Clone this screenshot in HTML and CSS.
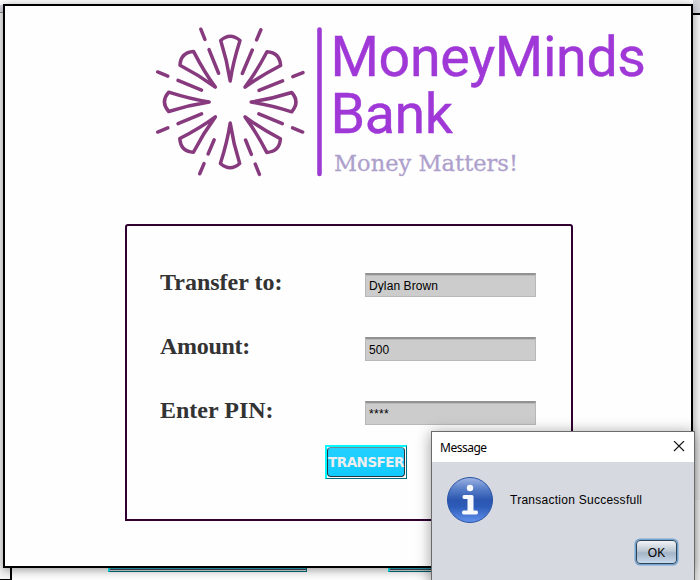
FILE: index.html
```html
<!DOCTYPE html>
<html lang="en">
<head>
<meta charset="utf-8">
<title>MoneyMinds Bank</title>
<link rel="stylesheet" href="styles.css">
</head>
<body>
<div class="desktop">
  <div class="back-title-left"></div>
  <div class="back-title-right"></div>
  <div class="back-window">
    <div class="back-button back-button-a"></div>
    <div class="back-button back-button-b"></div>
  </div>

  <main class="window">
    <svg class="logo" width="500" height="160" viewBox="150 22 500 160">
      <defs>
        <path id="petal" d="M0 -21C-1.800 -33 -5.200 -48 -9.500 -61.500Q0 -70 9.800 -61.500C5.500 -48 1.800 -33 0 -21Z"/>
        <path id="ray" d="M0 -31V-56.500M0 -67.500V-78.500"/>
        <path id="short-ray" d="M0 -41V-56.500M0 -67V-78"/>
      </defs>
      <g class="burst" transform="translate(230.200 102)">
        <use href="#petal"/>
        <use href="#petal" transform="rotate(45)"/>
        <use href="#petal" transform="rotate(90)"/>
        <use href="#petal" transform="rotate(135)"/>
        <use href="#petal" transform="rotate(180)"/>
        <use href="#petal" transform="rotate(225)"/>
        <use href="#petal" transform="rotate(270)"/>
        <use href="#petal" transform="rotate(315)"/>
        <use href="#ray" transform="rotate(23)"/>
        <use href="#ray" transform="rotate(68)"/>
        <use href="#ray" transform="rotate(112.500)"/>
        <use href="#short-ray" transform="rotate(158)"/>
        <use href="#short-ray" transform="rotate(203)"/>
        <use href="#ray" transform="rotate(247.500)"/>
        <use href="#ray" transform="rotate(292.500)"/>
        <use href="#ray" transform="rotate(338)"/>
      </g>
      <path class="divider" d="M319.500 29.500V174"/>
      <text class="brand" x="330.500" y="76" textLength="315.500">MoneyMinds</text>
      <text class="brand" x="330.500" y="132.500" textLength="122.500">Bank</text>
      <text class="tagline" x="334" y="170.500" textLength="184" lengthAdjust="spacingAndGlyphs">Money Matters!</text>
    </svg>

    <section class="panel">
      <div class="row"><span class="label">Transfer to:</span><span class="field">Dylan Brown</span></div>
      <div class="row"><span class="label label-amount">Amount:</span><span class="field">500</span></div>
      <div class="row"><span class="label">Enter PIN:</span><span class="field pin">****</span></div>
      <div class="transfer"><span class="transfer-face">TRANSFER</span></div>
    </section>
  </main>

  <div class="dialog">
    <header class="dialog-title">
      <span>Message</span>
      <svg width="12" height="12" viewBox="0 0 12 12"><path class="close" d="M1 0L11 10M11 0L1 10"/></svg>
    </header>
    <div class="dialog-content">
      <svg class="info" width="48" height="48" viewBox="0 0 48 48">
        <defs>
          <linearGradient id="blue" x1="0" y1="0" x2="0" y2="1">
            <stop offset="0" stop-color="#a0b4e4"/>
            <stop offset=".25" stop-color="#587fc9"/>
            <stop offset=".5" stop-color="#2c56b0"/>
            <stop offset=".65" stop-color="#2d5bb8"/>
            <stop offset="1" stop-color="#6292ee"/>
          </linearGradient>
        </defs>
        <circle cx="24" cy="24" r="22.500" fill="url(#blue)" stroke="#2752a4"/>
        <circle class="mark" cx="24" cy="12" r="3.200"/>
        <path class="mark" d="M18 19H26Q27.500 19 27.500 20.500V34.500H30.500Q32 34.500 32 36.500Q32 38.500 30.500 38.500H17.500Q16 38.500 16 36.500Q16 34.500 17.500 34.500H21.500V23H18Q16.500 23 16.500 21Q16.500 19 18 19Z"/>
      </svg>
      <span class="dialog-text">Transaction Successfull</span>
    </div>
    <div class="ok">OK</div>
  </div>
</div>
</body>
</html>
```
FILE: styles.css
```css
body {
  margin: 0;
}

.desktop {
  position: relative;
  width: 700px;
  height: 580px;
  overflow: hidden;
  background: linear-gradient(#fdfdfd 5px, #f5f5f5 5px);
  font-family: "Liberation Sans", Arial, sans-serif;
}

.back-title-left {
  position: absolute;
  left: 0;
  top: 5px;
  width: 11px;
  height: 574px;
  background: linear-gradient(#d5d7dd 7px, #8a8d91 7px, #8a8d91 8px, #f4f4f4 8px);
  border-bottom: 1px solid #000;
}

.back-title-right {
  position: absolute;
  left: 693px;
  top: 0;
  width: 7px;
  height: 13px;
  background: #d5d7dd;
  border-bottom: 2px solid #000;
}

.back-window {
  position: absolute;
  left: 10px;
  top: 500px;
  width: 700px;
  height: 90px;
  border-left: 2px solid #000;
  background: #fdfdfd;
}

.back-button {
  position: absolute;
  top: 40px;
  box-sizing: border-box;
  height: 32px;
  border: 2px solid #00f5ff;
  border-right: 1px solid #006a7c;
  border-bottom: 1px solid #006a7c;
  background: linear-gradient(#2bb5cc 27px, #424b4e 27px, #424b4e 28px, #ddd 28px);
}

.back-button-a {
  left: 96px;
  width: 199px;
}

.back-button-b {
  left: 376px;
  width: 120px;
}

.window {
  position: absolute;
  left: 3px;
  top: 4px;
  box-sizing: border-box;
  width: 690px;
  height: 564px;
  border: 2px solid #000;
  background: #fefefe;
  box-shadow: 0 2px 9px rgba(0, 0, 0, .4);
}

.logo {
  display: block;
  margin: 16px 0 0 145px;
}

.burst {
  fill: none;
  stroke: #873b7e;
  stroke-width: 3.5;
  stroke-linecap: round;
  stroke-linejoin: round;
}

.divider {
  stroke: #9d3bd5;
  stroke-width: 4.6;
  stroke-linecap: round;
}

.brand {
  font: 55.5px Roboto, sans-serif;
  fill: #9f38d7;
  stroke: #9f38d7;
  stroke-width: .4;
}

.tagline {
  font: 23px "DejaVu Serif", serif;
  fill: #aea0cc;
  stroke: #aea0cc;
  stroke-width: .3;
}

.panel {
  box-sizing: border-box;
  width: 448px;
  height: 297px;
  margin: 42px 0 0 120px;
  padding: 47px 35px 0 33px;
  border: 2px solid #300030;
  border-radius: 3px 3px 0 0;
}

.row {
  display: flex;
  justify-content: space-between;
  height: 24px;
  margin-bottom: 40px;
}

.label {
  font: bold 24px/24px "Liberation Serif", "Times New Roman", serif;
  color: #333;
  margin-top: -3px;
  white-space: nowrap;
}

.label-amount {
  letter-spacing: -.3px;
}

.field {
  box-sizing: border-box;
  width: 171px;
  height: 24px;
  padding-left: 3px;
  border: 1px solid #b8b8b8;
  border-top: 2px solid #929292;
  background: #ccc;
  box-shadow: inset 0 1px #bababa;
  font-size: 12px;
  letter-spacing: .1px;
  line-height: 22px;
  color: #000;
}

.pin {
  letter-spacing: .33px;
}

.transfer {
  box-sizing: border-box;
  width: 82px;
  height: 34px;
  margin: -20px 0 0 165px;
  padding: 0 1px 1px 0;
  border: 2px solid #00f8ff;
  border-right: 1px solid #006a7c;
  border-bottom: 1px solid #006a7c;
}

.transfer-face {
  display: flex;
  align-items: center;
  justify-content: center;
  box-sizing: border-box;
  height: 30px;
  border: 1px solid #26363f;
  border-top-color: #6a8b98;
  border-radius: 4px;
  background: linear-gradient(#22d0ff, #12caff);
  color: #eee;
  font: bold 13.5px "DejaVu Sans", sans-serif;
  letter-spacing: -.5px;
}

.dialog {
  position: absolute;
  left: 431px;
  top: 431px;
  box-sizing: border-box;
  width: 264px;
  height: 170px;
  border: 1px solid #6b6b6b;
  background: #d6d9df;
  box-shadow: 0 2px 14px rgba(0, 0, 0, .4);
  color: #000;
}

.dialog-title {
  display: flex;
  align-items: center;
  justify-content: space-between;
  height: 30px;
  padding: 0 9px 0 8px;
  background: #fff;
  font: 12px "Noto Sans", sans-serif;
  letter-spacing: -.5px;
}

.close {
  stroke: #111;
  stroke-width: 1.1;
}

.dialog-content {
  display: flex;
  align-items: center;
  gap: 16px;
  height: 48px;
  padding: 14px 0 0 14px;
}

.mark {
  fill: #f8f9fc;
}

.dialog-text {
  font-size: 12px;
  letter-spacing: .26px;
  white-space: nowrap;
}

.ok {
  box-sizing: border-box;
  width: 41px;
  height: 24px;
  margin: 16px 0 0 204px;
  border: 1px solid #2f4356;
  border-radius: 4px;
  background: linear-gradient(#f1f4f7, #bcc8d4 45%, #a4b5c7 55%, #c6d8eb);
  box-shadow: 0 0 0 1.500px #73a4d1;
  font-size: 12px;
  line-height: 24px;
  text-align: center;
}
```
